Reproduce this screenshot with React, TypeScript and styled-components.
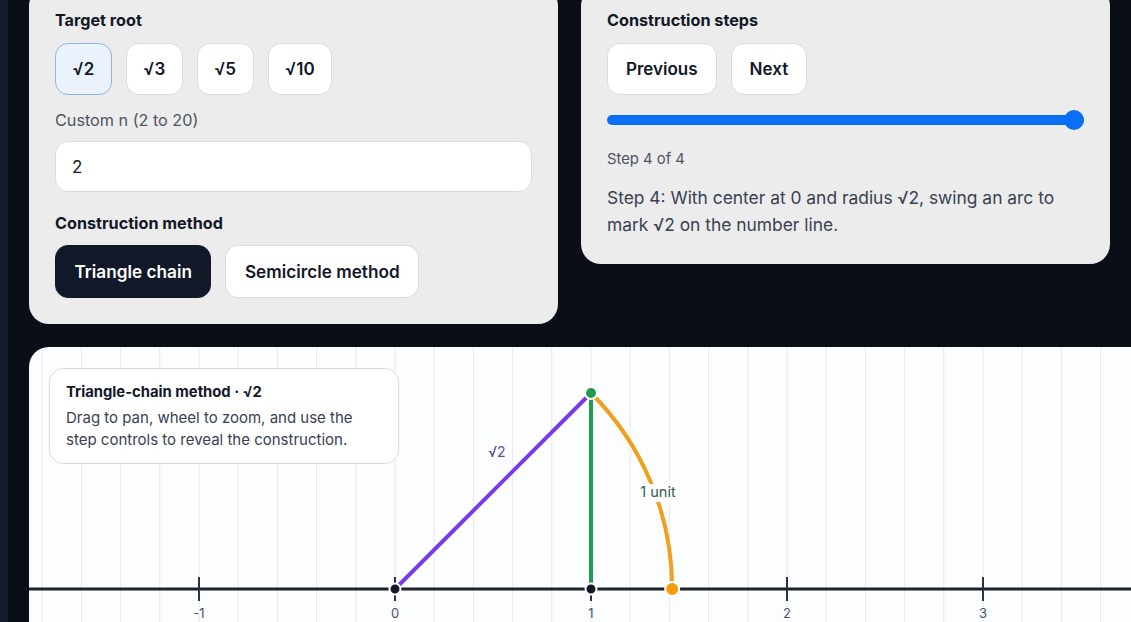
import { createGlobalStyle, styled } from "styled-components";

const GlobalStyle = createGlobalStyle`
	html, body {
		margin: 0;
		padding: 0;
		background: #0a0e17;
		overflow: hidden;
		font-family: Inter, "Noto Sans", "Liberation Sans", sans-serif;
	}
	* {
		box-sizing: border-box;
	}
`;

interface ChoiceProps {
	active?: boolean;
	dark?: boolean;
	compact?: boolean;
}

const UNIT = 196;
const ORIGIN_X = 366;
const AXIS_Y = 242;
const APEX_Y = AXIS_Y - UNIT;
const GRID_STEP = UNIT / 5;

const roots = ["√2", "√3", "√5", "√10"];

function NumberLine() {
	const width = 1120;
	const height = 300;
	const gridLines: number[] = [];
	for (let x = ORIGIN_X - 9 * GRID_STEP; x < width; x += GRID_STEP) gridLines.push(x);
	const ticks = [-1, 0, 1, 2, 3];
	const r = Math.SQRT2 * UNIT;
	const oneX = ORIGIN_X + UNIT;
	const rootX = ORIGIN_X + r;

	return (
		<svg width={width} height={height} viewBox={`0 0 ${width} ${height}`}>
			{gridLines.map((x) => (
				<line key={x} x1={x} y1={0} x2={x} y2={height} stroke="#e6e8ec" strokeWidth={1} />
			))}
			<line x1={0} y1={AXIS_Y} x2={width} y2={AXIS_Y} stroke="#1b2230" strokeWidth={3} />
			{ticks.map((t) => (
				<g key={t}>
					<line
						x1={ORIGIN_X + t * UNIT}
						y1={AXIS_Y - 12}
						x2={ORIGIN_X + t * UNIT}
						y2={AXIS_Y + 12}
						stroke="#2b3240"
						strokeWidth={2}
					/>
					<text
						x={ORIGIN_X + t * UNIT}
						y={AXIS_Y + 29}
						textAnchor="middle"
						fontSize={13}
						fill="#4b5563"
						fontFamily="Inter, sans-serif"
					>
						{t}
					</text>
				</g>
			))}
			<line x1={ORIGIN_X} y1={AXIS_Y} x2={oneX} y2={APEX_Y} stroke="#7c3aed" strokeWidth={4} />
			<line x1={oneX} y1={AXIS_Y} x2={oneX} y2={APEX_Y} stroke="#1f9d55" strokeWidth={4} />
			<path
				d={`M ${oneX} ${APEX_Y} A ${r} ${r} 0 0 1 ${rootX} ${AXIS_Y}`}
				fill="none"
				stroke="#f0a01e"
				strokeWidth={4}
			/>
			<text
				x={468}
				y={110}
				textAnchor="middle"
				fontSize={14}
				fill="#5b4a9a"
				fontFamily="Inter, sans-serif"
			>
				√2
			</text>
			<text
				x={629}
				y={150}
				textAnchor="middle"
				fontSize={14.5}
				fill="#35594a"
				stroke="#ffffff"
				strokeWidth={10}
				strokeLinejoin="round"
				paintOrder="stroke"
				fontFamily="Inter, sans-serif"
			>
				1 unit
			</text>
			<circle cx={ORIGIN_X} cy={AXIS_Y} r={5.5} fill="#111827" stroke="#ffffff" strokeWidth={2} />
			<circle cx={oneX} cy={AXIS_Y} r={5.5} fill="#111827" stroke="#ffffff" strokeWidth={2} />
			<circle cx={oneX} cy={APEX_Y} r={6} fill="#1f9d55" stroke="#ffffff" strokeWidth={2} />
			<circle cx={rootX} cy={AXIS_Y} r={7} fill="#f59e0b" stroke="#ffffff" strokeWidth={2} />
		</svg>
	);
}

export default function App() {
	return (
		<>
			<GlobalStyle />
			<Page>
				<Strip />
				<Main>
					<TopGrid>
						<Panel>
							<Heading>Target root</Heading>
							<ButtonRow>
								{roots.map((root, idx) => (
									<Choice key={root} active={idx === 0} compact>
										{root}
									</Choice>
								))}
							</ButtonRow>
							<FieldLabel>Custom n (2 to 20)</FieldLabel>
							<NumberInput type="text" defaultValue="2" />
							<Heading style={{ marginTop: 21 }}>Construction method</Heading>
							<ButtonRow>
								<MethodButton dark>Triangle chain</MethodButton>
								<MethodButton>Semicircle method</MethodButton>
							</ButtonRow>
						</Panel>
						<Panel>
							<Heading>Construction steps</Heading>
							<ButtonRow>
								<Choice>Previous</Choice>
								<Choice>Next</Choice>
							</ButtonRow>
							<Slider>
								<Track />
								<Thumb />
							</Slider>
							<StepCount>Step 4 of 4</StepCount>
							<StepText>
								Step 4: With center at 0 and radius √2, swing an arc to mark √2 on the number
								line.
							</StepText>
						</Panel>
					</TopGrid>
					<CanvasPanel>
						<NumberLine />
						<InfoCard>
							<InfoTitle>Triangle-chain method · √2</InfoTitle>
							<InfoText>
								Drag to pan, wheel to zoom, and use the step controls to reveal the construction.
							</InfoText>
						</InfoCard>
					</CanvasPanel>
				</Main>
			</Page>
		</>
	);
}

const Page = styled.div`
	display: flex;
	min-height: 622px;
	width: 1131px;
	overflow: hidden;
`;

const Strip = styled.div`
	flex: 0 0 8px;
	background: #151c2c;
`;

const Main = styled.div`
	flex: 1;
	padding-left: 21px;
	display: flex;
	flex-direction: column;
	gap: 23px;
	margin-top: -14px;
`;

const TopGrid = styled.div`
	display: grid;
	grid-template-columns: 529px 529px;
	gap: 23px;
	align-items: start;
`;

const Panel = styled.section`
	background: #ececec;
	border-radius: 20px;
	padding: 24px 26px 26px;
	display: flex;
	flex-direction: column;
`;

const Heading = styled.h3`
	margin: 0;
	padding-top: 1px;
	font-size: 16.2px;
	line-height: 19px;
	font-weight: 700;
	color: #111827;
`;

const ButtonRow = styled.div`
	display: flex;
	gap: 14px;
	margin-top: 13px;
`;

const Choice = styled.button<ChoiceProps>`
	height: 52px;
	padding: 0 ${({ compact }) => (compact ? "16.5px" : "18px")};
	border-radius: 13px;
	border: 1px solid ${({ active }) => (active ? "#8db6e6" : "#dcdcdc")};
	background: ${({ active }) => (active ? "#eaf2fc" : "#ffffff")};
	font-family: inherit;
	font-size: 17px;
	font-weight: 600;
	color: #111827;
	cursor: pointer;
`;

const MethodButton = styled.button<ChoiceProps>`
	height: 53px;
	padding: 0 18.5px;
	border-radius: 13px;
	border: 1px solid ${({ dark }) => (dark ? "#111827" : "#dcdcdc")};
	background: ${({ dark }) => (dark ? "#111827" : "#ffffff")};
	color: ${({ dark }) => (dark ? "#ffffff" : "#111827")};
	font-family: inherit;
	font-size: 17.2px;
	font-weight: 600;
	cursor: pointer;
	margin-top: -1px;
`;

const FieldLabel = styled.label`
	margin-top: 15px;
	font-size: 16.2px;
	line-height: 20px;
	color: #4b5563;
`;

const NumberInput = styled.input`
	margin-top: 11px;
	height: 51px;
	width: 100%;
	padding: 0 16px;
	border-radius: 13px;
	border: 1px solid #dcdcdc;
	background: #ffffff;
	font-family: inherit;
	font-size: 17px;
	color: #111827;
	outline: none;
`;

const Slider = styled.div`
	position: relative;
	margin-top: 15px;
	height: 20px;
	display: flex;
	align-items: center;
`;

const Track = styled.div`
	width: 100%;
	height: 10px;
	border-radius: 5px;
	background: #0b6ff2;
`;

const Thumb = styled.div`
	position: absolute;
	right: 0;
	top: 0;
	width: 20px;
	height: 20px;
	border-radius: 50%;
	background: #0b6ff2;
`;

const StepCount = styled.div`
	margin-top: 20px;
	font-size: 14.8px;
	line-height: 18px;
	color: #4b5563;
`;

const StepText = styled.p`
	margin: 16px 0 0;
	font-size: 17.4px;
	line-height: 27px;
	color: #374151;
`;

const CanvasPanel = styled.section`
	position: relative;
	width: 1120px;
	height: 300px;
	border-radius: 20px 0 0 0;
	background: #fcfdfe;
	overflow: hidden;
	svg {
		display: block;
	}
`;

const InfoCard = styled.div`
	position: absolute;
	left: 20px;
	top: 21px;
	width: 350px;
	padding: 13px 16px 12px;
	border-radius: 14px;
	border: 1px solid #d9dbe0;
	background: rgba(255, 255, 255, 0.94);
`;

const InfoTitle = styled.div`
	font-size: 14.8px;
	line-height: 20px;
	font-weight: 700;
	color: #111827;
`;

const InfoText = styled.div`
	margin-top: 5px;
	font-size: 15px;
	line-height: 22px;
	color: #374151;
`;
